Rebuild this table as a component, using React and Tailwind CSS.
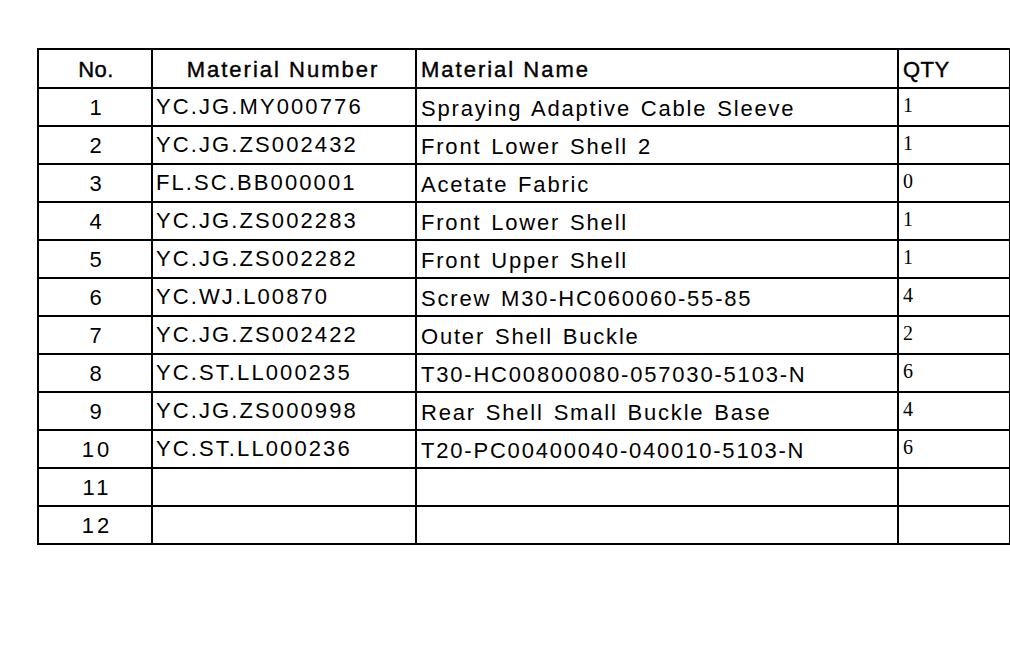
import React from 'react';

const rows = [
  { no: 1, code: 'YC.JG.MY000776', name: 'Spraying Adaptive Cable Sleeve', qty: '1' },
  { no: 2, code: 'YC.JG.ZS002432', name: 'Front Lower Shell 2', qty: '1' },
  { no: 3, code: 'FL.SC.BB000001', name: 'Acetate Fabric', qty: '0' },
  { no: 4, code: 'YC.JG.ZS002283', name: 'Front Lower Shell', qty: '1' },
  { no: 5, code: 'YC.JG.ZS002282', name: 'Front Upper Shell', qty: '1' },
  { no: 6, code: 'YC.WJ.L00870', name: 'Screw M30-HC060060-55-85', qty: '4' },
  { no: 7, code: 'YC.JG.ZS002422', name: 'Outer Shell Buckle', qty: '2' },
  { no: 8, code: 'YC.ST.LL000235', name: 'T30-HC00800080-057030-5103-N', qty: '6' },
  { no: 9, code: 'YC.JG.ZS000998', name: 'Rear Shell Small Buckle Base', qty: '4' },
  { no: 10, code: 'YC.ST.LL000236', name: 'T20-PC00400040-040010-5103-N', qty: '6' },
  { no: 11, code: '', name: '', qty: '' },
  { no: 12, code: '', name: '', qty: '' },
];

export default function App() {
  return (
    <div className="w-[1010px] h-[666px] bg-white pt-[48px] pl-[37px] font-['Liberation_Sans',Arial,sans-serif] text-black">
      <table className="table-fixed border-collapse w-[972px]">
        <colgroup>
          <col className="w-[114px]" />
          <col className="w-[264px]" />
          <col className="w-[482px]" />
          <col className="w-[112px]" />
        </colgroup>
        <thead>
          <tr className="h-[39px] text-[22px] leading-none [-webkit-text-stroke:0.4px_black]">
            <th className="border-2 border-black font-normal text-center tracking-[0.5px] pl-[2px] pt-[2px]">No.</th>
            <th className="border-2 border-black font-normal text-center tracking-[2px] pr-[2px] pt-[2px]">Material Number</th>
            <th className="border-2 border-black font-normal text-left tracking-[2px] pl-[4px] pt-[2px]">Material Name</th>
            <th className="border-2 border-black font-normal text-left tracking-[0.5px] pl-[4px] pt-[2px]">QTY</th>
          </tr>
        </thead>
        <tbody>
          {rows.map((r) => (
            <tr key={r.no} className="h-[38px] text-[22px] leading-none">
              <td className="border-2 border-black text-center tracking-[3px] pl-[4px] pt-[1px]">{r.no}</td>
              <td className="border-2 border-black text-left tracking-[2.1px] pl-[3px]">{r.code}</td>
              <td className="border-2 border-black text-left tracking-[1.8px] [word-spacing:2px] pl-[4px] pt-[4px]">{r.name}</td>
              <td className="border-2 border-black text-left align-top pl-[4px] pt-[6px] font-['Liberation_Serif','Times_New_Roman',serif] text-[20px]">{r.qty}</td>
            </tr>
          ))}
        </tbody>
      </table>
    </div>
  );
}
